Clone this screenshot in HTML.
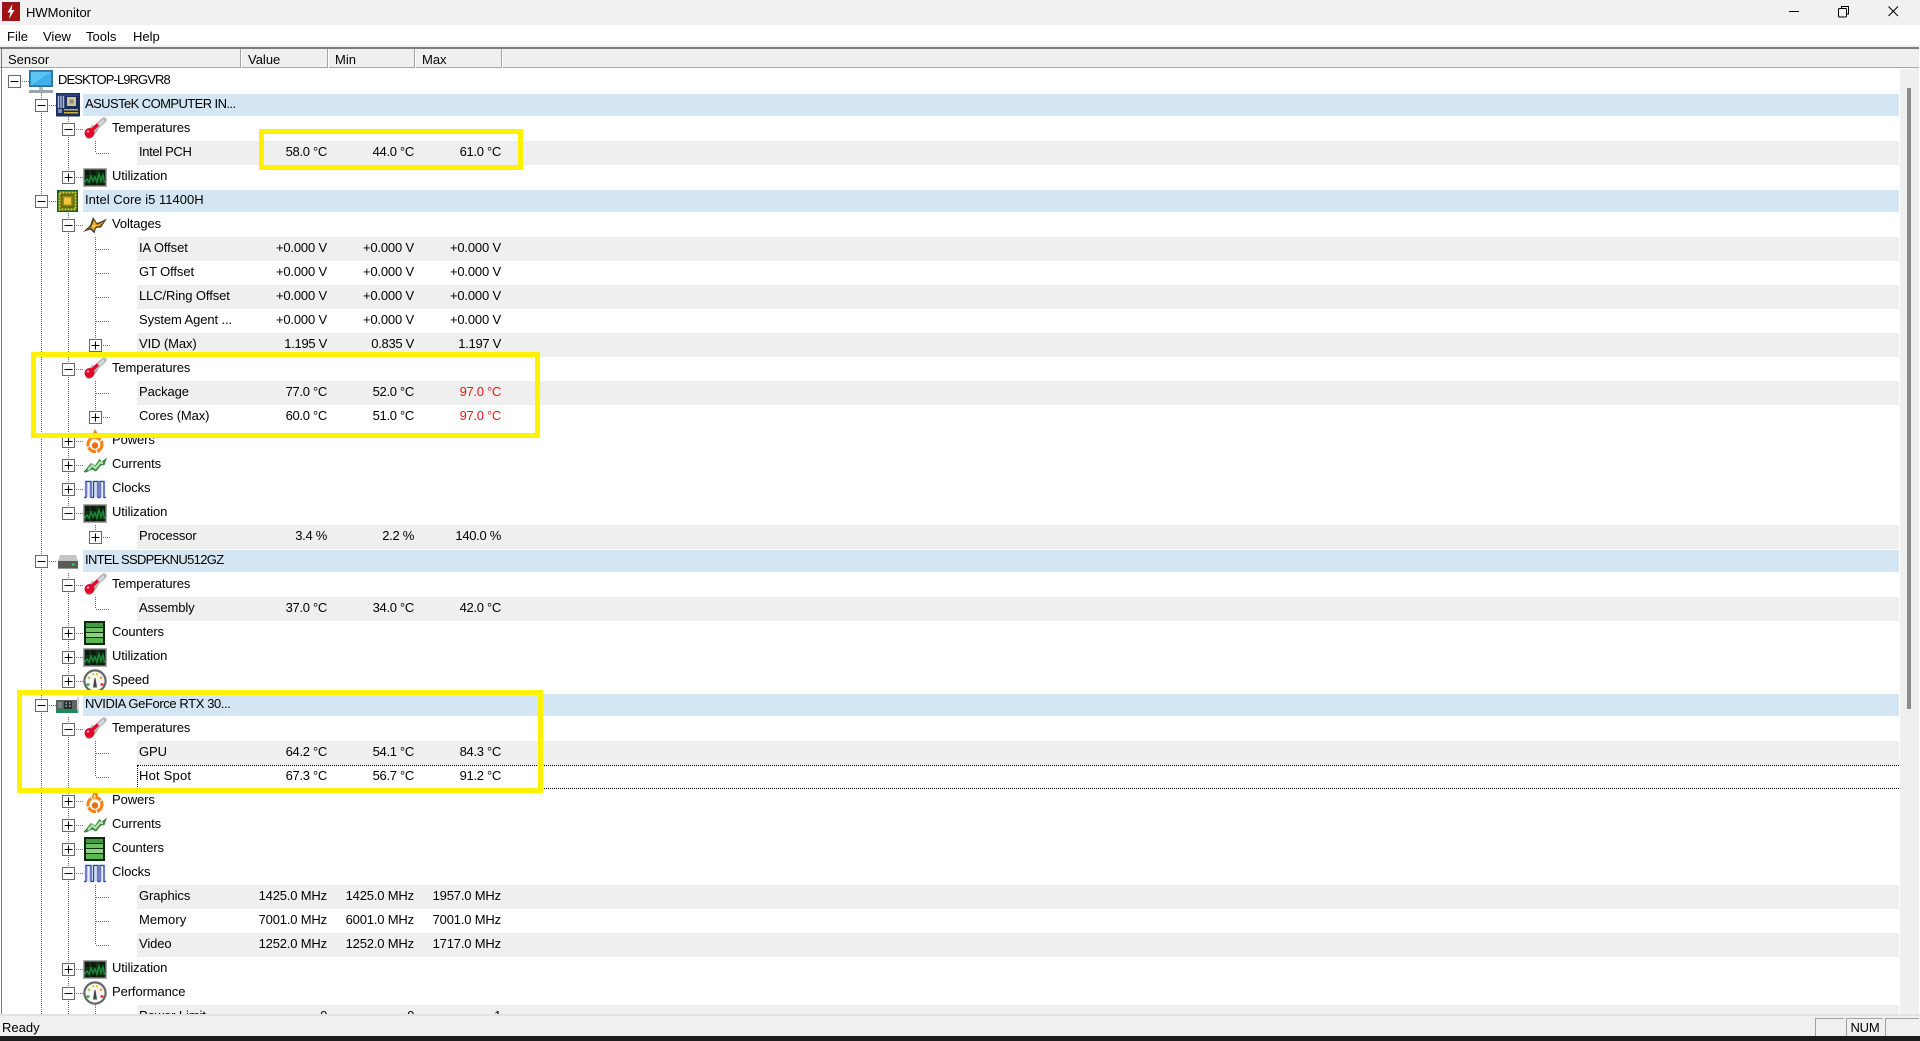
<!DOCTYPE html>
<html lang="en"><head><meta charset="utf-8"><title>HWMonitor</title>
<style>
html,body{margin:0;padding:0;width:1920px;height:1041px;overflow:hidden;background:#fff}
body{font:13px/24px "Liberation Sans",sans-serif;color:#000;position:relative}
div,span{position:absolute;white-space:nowrap}
#title{left:0;top:0;width:1920px;height:25px;background:#f1f1f1}
#title span{left:26px;top:0;line-height:25px}
#menu{left:0;top:25px;width:1920px;height:20px;background:#fff}
#menu span{top:0;line-height:23px}
#hdrgap{left:0;top:45px;width:1920px;height:2px;background:#f0f0f0}
#hdr{left:0;top:47px;width:1919px;height:21px;background:#efefef;border-top:2px solid #7c7c7c;border-bottom:1px solid #a5a5a5;box-sizing:border-box}
#hdr span{top:0;line-height:21px}
#hdr i{position:absolute;top:0;width:1px;height:19px;background:#a5a5a5;border-right:1px solid #fff}
#tree{left:0;top:69px;width:1919px;height:945px;overflow:hidden}
.r{position:relative;display:block;height:24px;width:1919px}
.r.d:before{content:"";position:absolute;left:83px;width:1816px;top:1px;height:22px;background:#d4e6f4}
.r.g:before{content:"";position:absolute;left:137px;width:1762px;top:0;height:24px;background:#efefef}
.r span{top:-1px;line-height:24px}
.n0{left:58px;letter-spacing:-.91px}
.n1{left:85px;letter-spacing:-.35px}
.n2{left:112px;letter-spacing:-.1px}
.n3{left:139px;letter-spacing:-.1px}
.a,.b,.c{text-align:right;left:0;letter-spacing:-.3px}
.a{width:327px}.b{width:414px}.c{width:501px}
.v .a,.v .b,.v .c{letter-spacing:-.17px}
.red{color:#f0141e}
#sb{left:1900px;top:69px;width:19px;height:945px;background:#efefef}
#th{left:1907px;top:88px;width:4px;height:621px;background:#8a8a8a}
#lb{left:1px;top:47px;width:1px;height:967px;background:#777}
#st{left:0;top:1014px;width:1920px;height:22px;background:#f0f0f0;border-top:2px solid #e2e2e2;box-sizing:border-box}
#st span{left:2px;top:0;line-height:24px}
.p{top:2px;height:18px;border-top:1px solid #a0a0a0;border-left:1px solid #a0a0a0;box-sizing:border-box;line-height:18px;text-align:center;letter-spacing:-.2px}
#blk{left:0;top:1036px;width:1920px;height:5px;background:#1c1c1c}
.y{border:5px solid #fff200;box-sizing:border-box}
#focus{left:137px;top:765px;width:1762px;height:24px;border:1px dotted #000;border-right:0;box-sizing:border-box}
svg{position:absolute;left:0;top:0}
</style></head><body>

<div id="title"><span>HWMonitor</span></div>
<div id="menu"><span style="left:7px">File</span><span style="left:43px">View</span><span style="left:86px">Tools</span><span style="left:133px">Help</span></div>
<div id="hdrgap"></div>
<div id="hdr"><span style="left:8px">Sensor</span><i style="left:240px"></i><span style="left:248px">Value</span><i style="left:327px"></i><span style="left:335px">Min</span><i style="left:414px"></i><span style="left:422px">Max</span><i style="left:501px"></i></div>

<div id="tree">
<div class="r"><span class="n0">DESKTOP-L9RGVR8</span></div>
<div class="r d"><span class="n1" style="letter-spacing:-.58px">ASUSTeK COMPUTER IN...</span></div>
<div class="r"><span class="n2">Temperatures</span></div>
<div class="r g"><span class="n3" style="letter-spacing:-.35px">Intel PCH</span><span class="a">58.0 °C</span><span class="b">44.0 °C</span><span class="c">61.0 °C</span></div>
<div class="r"><span class="n2">Utilization</span></div>
<div class="r d"><span class="n1" style="letter-spacing:.02px">Intel Core i5 11400H</span></div>
<div class="r"><span class="n2">Voltages</span></div>
<div class="r g v"><span class="n3">IA Offset</span><span class="a">+0.000 V</span><span class="b">+0.000 V</span><span class="c">+0.000 V</span></div>
<div class="r v"><span class="n3">GT Offset</span><span class="a">+0.000 V</span><span class="b">+0.000 V</span><span class="c">+0.000 V</span></div>
<div class="r g v"><span class="n3">LLC/Ring Offset</span><span class="a">+0.000 V</span><span class="b">+0.000 V</span><span class="c">+0.000 V</span></div>
<div class="r v"><span class="n3">System Agent ...</span><span class="a">+0.000 V</span><span class="b">+0.000 V</span><span class="c">+0.000 V</span></div>
<div class="r g"><span class="n3">VID (Max)</span><span class="a">1.195 V</span><span class="b">0.835 V</span><span class="c">1.197 V</span></div>
<div class="r"><span class="n2">Temperatures</span></div>
<div class="r g"><span class="n3">Package</span><span class="a">77.0 °C</span><span class="b">52.0 °C</span><span class="c red">97.0 °C</span></div>
<div class="r"><span class="n3">Cores (Max)</span><span class="a">60.0 °C</span><span class="b">51.0 °C</span><span class="c red">97.0 °C</span></div>
<div class="r"><span class="n2">Powers</span></div>
<div class="r"><span class="n2">Currents</span></div>
<div class="r"><span class="n2">Clocks</span></div>
<div class="r"><span class="n2">Utilization</span></div>
<div class="r g"><span class="n3">Processor</span><span class="a">3.4 %</span><span class="b">2.2 %</span><span class="c">140.0 %</span></div>
<div class="r d"><span class="n1" style="letter-spacing:-.67px">INTEL SSDPEKNU512GZ</span></div>
<div class="r"><span class="n2">Temperatures</span></div>
<div class="r g"><span class="n3">Assembly</span><span class="a">37.0 °C</span><span class="b">34.0 °C</span><span class="c">42.0 °C</span></div>
<div class="r"><span class="n2">Counters</span></div>
<div class="r"><span class="n2">Utilization</span></div>
<div class="r"><span class="n2">Speed</span></div>
<div class="r d"><span class="n1" style="letter-spacing:-.4px">NVIDIA GeForce RTX 30...</span></div>
<div class="r"><span class="n2">Temperatures</span></div>
<div class="r g"><span class="n3">GPU</span><span class="a">64.2 °C</span><span class="b">54.1 °C</span><span class="c">84.3 °C</span></div>
<div class="r"><span class="n3" style="letter-spacing:.2px">Hot Spot</span><span class="a">67.3 °C</span><span class="b">56.7 °C</span><span class="c">91.2 °C</span></div>
<div class="r"><span class="n2">Powers</span></div>
<div class="r"><span class="n2">Currents</span></div>
<div class="r"><span class="n2">Counters</span></div>
<div class="r"><span class="n2">Clocks</span></div>
<div class="r g v"><span class="n3">Graphics</span><span class="a">1425.0 MHz</span><span class="b">1425.0 MHz</span><span class="c">1957.0 MHz</span></div>
<div class="r v"><span class="n3" style="letter-spacing:.05px">Memory</span><span class="a">7001.0 MHz</span><span class="b">6001.0 MHz</span><span class="c">7001.0 MHz</span></div>
<div class="r g v"><span class="n3">Video</span><span class="a">1252.0 MHz</span><span class="b">1252.0 MHz</span><span class="c">1717.0 MHz</span></div>
<div class="r"><span class="n2">Utilization</span></div>
<div class="r"><span class="n2">Performance</span></div>
<div class="r g"><span class="n3">Power Limit</span><span class="a">0</span><span class="b">0</span><span class="c">1</span></div>
</div>

<div id="focus"></div>
<div id="sb"></div><div id="th"></div><div id="lb"></div>

<svg width="1920" height="1041" viewBox="0 0 1920 1041">
<defs>
<filter id="bl" x="-10%" y="-10%" width="120%" height="120%"><feGaussianBlur stdDeviation="0.3"/></filter>
<g id="m"><rect x="-6" y="-6" width="12" height="12" fill="#fff" stroke="#6a6a6a"/><path d="M-4 0H4" stroke="#000"/></g>
<g id="p"><rect x="-6" y="-6" width="12" height="12" fill="#fff" stroke="#6a6a6a"/><path d="M-4 0H4M0-4V4" stroke="#000"/></g>
<symbol id="mon" viewBox="0 0 24 24" width="24" height="24"><rect x="0.5" y="0.5" width="23" height="16" fill="#1f8fc4" stroke="#2a6f9c"/><rect x="2" y="2" width="20" height="13" fill="#5cc4f4"/><path d="M2 15L22 2V15Z" fill="#3eb0ea"/><rect x="10" y="17" width="4" height="3" fill="#b0bcc4"/><rect x="0" y="20" width="24" height="3" fill="#9aa6ae"/></symbol>
<symbol id="mb" viewBox="0 0 24 24" width="24" height="24"><rect x="0" y="0" width="24" height="23.5" fill="#1c2d5a"/><rect x="1" y="1" width="22" height="2" fill="#2c4478"/><path d="M2.500 3V15M5 3V15M7.500 3V15" stroke="#aebfdc" stroke-width="1.500"/><rect x="11" y="4" width="9" height="9" fill="#c9c6a6"/><rect x="13.500" y="6.500" width="4" height="4" fill="#8f8b72"/><rect x="2" y="16" width="4" height="4" fill="#7f92b8"/><rect x="8" y="16" width="14" height="1.500" fill="#c8b24a"/><rect x="8" y="19" width="14" height="1.500" fill="#c8b24a"/></symbol>
<symbol id="chip" viewBox="0 0 24 24" width="24" height="24"><rect x="1" y="1" width="21" height="22" fill="#1d5a2e"/><rect x="3.500" y="3.500" width="16" height="17" fill="#5c6a1e" stroke="#e6d020" stroke-width="2" stroke-dasharray="2 1"/><rect x="6.500" y="7" width="10" height="10" fill="#a98516"/><rect x="8" y="8.500" width="7" height="7" fill="#eec83a"/></symbol>
<symbol id="ssd" viewBox="0 0 24 24" width="24" height="24"><path d="M4 6H20L22 12H2Z" fill="#c6c6c6"/><rect x="2" y="12" width="20" height="7" fill="#5a5a5a"/><rect x="2" y="19" width="20" height="1" fill="#999"/><rect x="16" y="14.500" width="2.500" height="2" fill="#2ce04a"/></symbol>
<symbol id="gpu" viewBox="0 0 24 24" width="24" height="24"><rect x="0" y="7" width="21" height="10" fill="#5c6666"/><rect x="8" y="8" width="8" height="8" fill="#2a2e2e"/><path d="M9.500 10H11M13 10H14.500M9.500 13H11M13 13H14.500" stroke="#a8b0b0" stroke-width="1.500"/><rect x="2" y="9" width="4" height="6" fill="#7d8888"/><rect x="0" y="17" width="22" height="3" fill="#1f8a58"/><rect x="21.500" y="4" width="1" height="16" fill="#aab"/></symbol>
<symbol id="tm" viewBox="0 0 24 24" width="24" height="24"><path d="M6 18L11 12" stroke="#a8a8a8" stroke-width="8" stroke-linecap="round"/><path d="M21 3L11 12" stroke="#b8b8b8" stroke-width="5.500" stroke-linecap="round"/><path d="M21 3L16 8" stroke="#dedede" stroke-width="2"/><path d="M6 16L15 7.500" stroke="#e8062a" stroke-width="3"/><circle cx="6.500" cy="16" r="5" fill="#e8062a"/><circle cx="5" cy="14.500" r="1.300" fill="#ff9aa8"/></symbol>
<symbol id="ut" viewBox="0 0 24 24" width="24" height="24"><rect x="0" y="3" width="24" height="19" fill="#aaa"/><rect x="1.500" y="4.500" width="21" height="16" fill="#0e1a10"/><path d="M1.500 17H22.500M1.500 11H22.500M7 4.500V20.500M14 4.500V20.500" stroke="#1a3a20"/><path d="M2 17L4 14 6 17 8 11 10 16 12 12 14 17 16 9 18 16 20 10 21.500 18" fill="none" stroke="#158a34" stroke-width="1.600"/></symbol>
<symbol id="vo" viewBox="0 0 24 24" width="24" height="24"><path d="M0 19L7 12.500 10 4 14 10 19 8 24 5.500 18 14.500 13 15 11.500 20.500 7.500 16.500Z" fill="#453f2c"/><path d="M3 17.500L8.500 13.500 10.800 7 14 11.800 21 8.500 16.500 13.200 12 13.700 11 17.800 7.800 14.600Z" fill="#eeaa1e"/><path d="M9 12L13 12.500 12 14.500 9.500 13.500Z" fill="#ffe070"/></symbol>
<symbol id="po" viewBox="0 0 24 24" width="24" height="24"><circle cx="12" cy="15.500" r="7" fill="#fff" stroke="#f2861e" stroke-width="3.200" stroke-dasharray="9 1"/><path d="M11.500 0C14.500 3 15.500 6 15 9.500L9 9.500C8.500 6 11 3 11.500 0Z" fill="#f2861e"/><path d="M11.500 5C12.500 6 13 8 12.500 9.500H10.500C10.300 8 11 6.500 11.500 5Z" fill="#ffd8a0"/><circle cx="12" cy="16.500" r="3.200" fill="#ee6a10"/></symbol>
<symbol id="cu" viewBox="0 0 24 24" width="24" height="24"><path d="M0.500 19L8 10 12 12.500 16.500 6 19 8.500 24 4.500 21.500 12 18 12.500 13 18.500 9 16.500 3 19.500Z" fill="#3a8240"/><path d="M5 17L9 12.500 12.500 15 17 9.500 20 10" fill="none" stroke="#b4e6ac" stroke-width="2.200"/></symbol>
<symbol id="cl" viewBox="0 0 24 24" width="24" height="24"><rect x="1" y="3" width="22" height="18" fill="#eceff7"/><path d="M1 20.500H3V4.500H8V20.500H10.500V4.500H15V20.500H17V4.500H21V20.500H23" fill="none" stroke="#2e40a4" stroke-width="1.300"/><path d="M4.500 5V20M6.500 5V20M12 5V20M13.500 5V20M18.500 5V20" stroke="#c4cbe6"/></symbol>
<symbol id="co" viewBox="0 0 24 24" width="24" height="24"><rect x="1" y="0" width="21" height="24" fill="#0d2a10"/><rect x="3" y="2" width="17" height="4" fill="#3f9c42"/><rect x="3" y="7" width="17" height="4" fill="#6dc063"/><rect x="3" y="12" width="17" height="4" fill="#8ad47e"/><rect x="3" y="17" width="17" height="5" fill="#5fb457"/></symbol>
<symbol id="sp" viewBox="0 0 24 24" width="24" height="24"><circle cx="12" cy="12" r="10.600" fill="#f6f6f6" stroke="#666" stroke-width="2.200"/><path d="M3.500 15.500H6.500" stroke="#28a030" stroke-width="2.200"/><path d="M5 8L7 9.500" stroke="#9ed03c" stroke-width="2.200"/><path d="M10 4V6.500" stroke="#c6da5c" stroke-width="2.200"/><path d="M14 4V6.500" stroke="#f0cc3c" stroke-width="2.200"/><path d="M19 8L17 9.500" stroke="#f0a030" stroke-width="2.200"/><path d="M17.500 15.500H20.500" stroke="#ec2020" stroke-width="2.200"/><path d="M10 18.500L11.500 9H12.500L14 18.500Z" fill="#444"/></symbol>
</defs>

<g fill="none" stroke="#666" stroke-dasharray="1 1">
<path d="M41.500 93V1014M68.500 117V177M68.500 213V513M68.500 573V681M68.500 717V1014"/>
<path d="M95.500 141V153M95.500 237V345M95.500 381V417M95.500 525V537M95.500 597V609M95.500 741V777M95.500 885V945M95.500 1005V1014"/>
<path d="M20 81.500H29M47 105.500H56M47 201.500H56M47 561.500H56M47 705.500H56"/>
<path d="M74 129.500H83M74 177.500H83M74 225.500H83M74 369.500H83M74 441.500H83M74 465.500H83M74 489.500H83M74 513.500H83M74 585.500H83M74 633.500H83M74 657.500H83M74 681.500H83M74 729.500H83M74 801.500H83M74 825.500H83M74 849.500H83M74 873.500H83M74 969.500H83M74 993.500H83"/>
<path d="M96 153.500H110M96 249.500H110M96 273.500H110M96 297.500H110M96 321.500H110M101 345.500H110M96 393.500H110M101 417.500H110M101 537.500H110M96 609.500H110M96 753.500H110M96 777.500H110M96 897.500H110M96 921.500H110M96 945.500H110"/>
</g>

<use href="#m" x="14.500" y="81.500"/>
<use href="#m" x="41.500" y="105.500"/><use href="#m" x="41.500" y="201.500"/><use href="#m" x="41.500" y="561.500"/><use href="#m" x="41.500" y="705.500"/>
<use href="#m" x="68.500" y="129.500"/><use href="#p" x="68.500" y="177.500"/><use href="#m" x="68.500" y="225.500"/><use href="#m" x="68.500" y="369.500"/>
<use href="#p" x="68.500" y="441.500"/><use href="#p" x="68.500" y="465.500"/><use href="#p" x="68.500" y="489.500"/><use href="#m" x="68.500" y="513.500"/>
<use href="#m" x="68.500" y="585.500"/><use href="#p" x="68.500" y="633.500"/><use href="#p" x="68.500" y="657.500"/><use href="#p" x="68.500" y="681.500"/>
<use href="#m" x="68.500" y="729.500"/><use href="#p" x="68.500" y="801.500"/><use href="#p" x="68.500" y="825.500"/><use href="#p" x="68.500" y="849.500"/><use href="#m" x="68.500" y="873.500"/>
<use href="#p" x="68.500" y="969.500"/><use href="#m" x="68.500" y="993.500"/>
<use href="#p" x="95.500" y="345.500"/><use href="#p" x="95.500" y="417.500"/><use href="#p" x="95.500" y="537.500"/>

<g filter="url(#bl)">
<use href="#mon" x="29" y="70"/>
<use href="#mb" x="56" y="93"/><use href="#chip" x="56" y="189"/><use href="#ssd" x="56" y="549"/><use href="#gpu" x="56" y="693"/>
<use href="#tm" x="83" y="117"/><use href="#ut" x="83" y="165"/><use href="#vo" x="83" y="213"/><use href="#tm" x="83" y="357"/>
<use href="#po" x="83" y="429"/><use href="#cu" x="83" y="453"/><use href="#cl" x="83" y="477"/><use href="#ut" x="83" y="501"/>
<use href="#tm" x="83" y="573"/><use href="#co" x="83" y="621"/><use href="#ut" x="83" y="645"/><use href="#sp" x="83" y="669"/>
<use href="#tm" x="83" y="717"/><use href="#po" x="83" y="789"/><use href="#cu" x="83" y="813"/><use href="#co" x="83" y="837"/><use href="#cl" x="83" y="861"/>
<use href="#ut" x="83" y="957"/><use href="#sp" x="83" y="981"/>
</g>

<!-- title bar icons -->
<rect x="2" y="2" width="18" height="19" fill="#9c1414"/>
<path d="M12.500 4L7.500 12.500H10.500L9 19L14.500 10H11.500Z" fill="#fff"/>
<path d="M1789 11.500H1799" stroke="#000" stroke-width="1"/>
<path d="M1841.500 8V6.500H1848.500V14H1846.500" fill="none" stroke="#000"/>
<rect x="1838.500" y="8.500" width="8" height="8.500" rx="1" fill="none" stroke="#000"/>
<path d="M1888.500 6.500L1898 16M1898 6.500L1888.500 16" stroke="#000" fill="none"/>
</svg>

<div id="st"><span>Ready</span>
<div class="p" style="left:1815px;width:29px"></div>
<div class="p" style="left:1846px;width:37px">NUM</div>
<div class="p" style="left:1885px;width:34px"></div>
</div>
<div id="blk"></div>

<div class="y" style="left:259px;top:129px;width:264px;height:41px"></div>
<div class="y" style="left:31px;top:352px;width:509px;height:86px"></div>
<div class="y" style="left:17px;top:690px;width:526px;height:103px"></div>
</body></html>
